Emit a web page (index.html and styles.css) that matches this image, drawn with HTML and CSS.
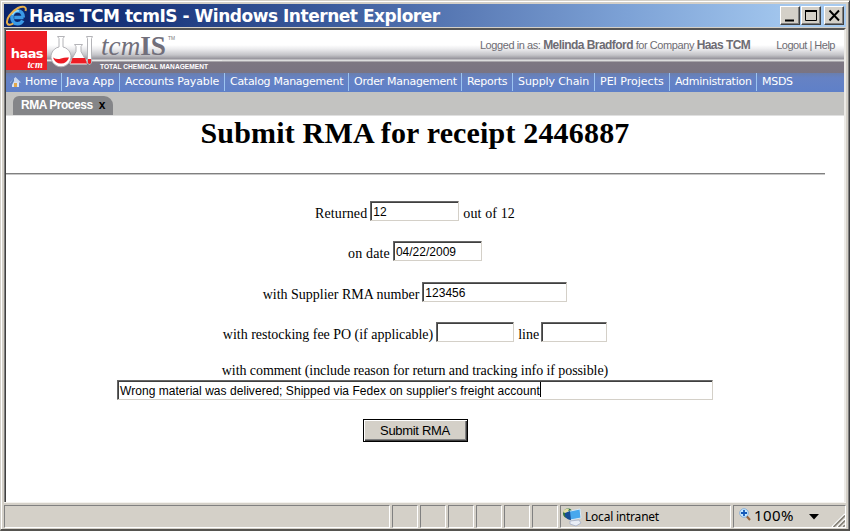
FILE: index.html
```
<!DOCTYPE html>
<html lang="en">
<head>
<meta charset="utf-8">
<title>Haas TCM tcmIS - Windows Internet Explorer</title>
<link rel="stylesheet" href="styles.css">
</head>
<body>
<div class="window">
  <div class="titlebar">
    <svg class="ie" width="23" height="22" viewBox="0 0 23 22">
      <path d="M18.500 12.500H9.200M17.800 15.500C16.500 18 14.500 18.800 12.500 18.800C9 18.800 6.900 16 6.900 12.300C6.900 8.500 9.500 6 12.700 6C16 6 18.300 8.400 18.300 12.500" fill="none" stroke="#3b9ae6" stroke-width="3.600"/>
      <path d="M7.500 10C8.500 7 11 5.500 14 6" fill="none" stroke="#8fdcff" stroke-width="1.600"/>
      <path d="M20.500 6C22 1.500 18 .5 13 3C6.500 6.500 .5 14 2.300 18.500C3.200 20.500 5.800 20 8.300 18.500" fill="none" stroke="#e8b04c" stroke-width="2"/>
    </svg>
    <span class="title">Haas TCM tcmIS - Windows Internet Explorer</span>
    <div class="controls">
      <span class="ctl"><svg width="16" height="16"><path d="M3 13.500h9" stroke="#000" stroke-width="2"/></svg></span>
      <span class="ctl"><svg width="16" height="16"><path d="M2.500 3.500h11v10h-11z" fill="none" stroke="#000"/><path d="M2 4h12" stroke="#000" stroke-width="2"/></svg></span>
      <span class="ctl close"><svg width="16" height="16"><path d="M3.500 3.500l9.500 10M13 3.500l-9.500 10" stroke="#000" stroke-width="1.900"/></svg></span>
    </div>
  </div>
  <div class="viewport">
    <div class="banner">
      <div class="haas"><b>haas</b><i>tcm</i></div>
      <svg class="logo" width="175" height="42" viewBox="0 0 175 42">
        <path d="M0 30.500H175" stroke="#e8e8e8" stroke-width="1.200"/>
        <g fill="#fff" stroke="#b4b4b8" stroke-width="1">
          <path d="M10.500 6.500h7l-1.500 2v8.500a10 10 0 1 1-4 0V8.500z"/>
          <path d="M27.500 14.500h8l-1.500 2v5l6 11q1 2-2 2H25q-3 0-2-2l6-11v-5z"/>
          <path d="M39.500 6.500h6l-1 2v24q-2 4-4 0v-24z"/>
        </g>
        <path d="M6 27.500q4 2.500 8 1t8-1q-2 6-8 6t-8-6z" fill="#ed1c24"/>
        <path d="M25.500 28h12.500l2 5.500H23.500z" fill="#ed1c24"/>
        <path d="M41 29h3v4q-1.500 2-3 0z" fill="#ed1c24"/>
        <text x="54" y="25" class="tcmis" textLength="65" lengthAdjust="spacingAndGlyphs"><tspan font-style="italic">tcm</tspan><tspan font-weight="bold">IS</tspan></text>
        <text x="121" y="10" class="tm" textLength="7" lengthAdjust="spacingAndGlyphs">TM</text>
        <text x="53" y="38.500" class="tagline" textLength="108" lengthAdjust="spacingAndGlyphs">TOTAL CHEMICAL MANAGEMENT</text>
      </svg>
      <div class="session"><span class="who">Logged in as: <b>Melinda Bradford</b> for Company <b>Haas TCM</b></span><span class="links">Logout | Help</span></div>
    </div>
    <nav class="menu">
      <a class="m-home"><svg width="11" height="12" viewBox="0 0 11 12"><path d="M2 6h7v5H2z" fill="#d8e4f4"/><path d="M0 6.500L5.500 1L11 6.500z" fill="#c9d6ee"/><path d="M1 6L4 2v3L2 9z" fill="#5c7fb8"/><path d="M4 7h3v4H4z" fill="#e2a84a"/></svg><span>Home</span></a>
      <a class="m-java">Java App</a>
      <a class="m-acct">Accounts Payable</a>
      <a class="m-cat">Catalog Management</a>
      <a class="m-order">Order Management</a>
      <a class="m-rep">Reports</a>
      <a class="m-supply">Supply Chain</a>
      <a class="m-pei">PEI Projects</a>
      <a class="m-admin">Administration</a>
      <a class="m-msds">MSDS</a>
    </nav>
    <div class="tabs"><div class="tab"><span>RMA Process</span><b>x</b></div></div>
    <main class="page">
      <h1>Submit RMA for receipt 2446887</h1>
      <hr>
      <form>
        <div class="row r-qty"><label>Returned</label><input class="w-qty" value="12"><label>out of 12</label></div>
        <div class="row r-date"><label>on date</label><input class="w-date" value="04/22/2009"></div>
        <div class="row r-rma"><label>with Supplier RMA number</label><input class="w-rma" value="123456"></div>
        <div class="row r-fee"><label>with restocking fee PO (if applicable)</label><input class="w-po"><label>line</label><input class="w-line"></div>
        <div class="comment-label">with comment (include reason for return and tracking info if possible)</div>
        <div class="comment"><span>Wrong material was delivered; Shipped via Fedex on supplier's freight account</span></div>
        <button type="button"><span>Submit RMA</span></button>
      </form>
    </main>
  </div>
  <footer class="status">
    <div class="cell msg"></div><div class="cell s"></div><div class="cell s"></div><div class="cell s"></div><div class="cell s"></div><div class="cell s"></div><div class="cell s last"></div>
    <div class="cell zone">
      <svg width="20" height="20" viewBox="0 0 20 20"><circle cx="6" cy="6.500" r="5" fill="#31723f"/><path d="M1 5q2-4 6-3l-2 5z" fill="#e2dda4"/><path d="M6 4.500L18 2l1 9-11 2z" fill="#48a8ed" stroke="#d9e9f7"/><path d="M3 6l5-2 1 9q-4 0-6-4z" fill="#164d94"/><path d="M8 14l9-1 2 3-5 3-6-2z" fill="#e8edf5" stroke="#9daac4" stroke-width=".7"/></svg>
      <span>Local intranet</span>
    </div>
    <div class="cell zoom">
      <svg class="lens" width="12" height="13" viewBox="0 0 12 13"><path d="M7.500 8l3.500 4" stroke="#98653e" stroke-width="2"/><circle cx="5" cy="5" r="4.300" fill="#c8e9ff" stroke="#86aeda"/><path d="M5 2v6M2 5h6" stroke="#1559b8" stroke-width="1.800"/></svg>
      <span>100%</span>
      <svg class="drop" width="10" height="6"><path d="M0 0h10L5 5.500z" fill="#000"/></svg>
      <svg class="grip" width="15" height="15"><path d="M2 15L15 2M7 15l8-8M12 15l3-3" stroke="#fff" stroke-width="1.500"/><path d="M3.500 15L15 3.500M8.500 15L15 8.500M13 15l2-2" stroke="#858178" stroke-width="1.700"/></svg>
    </div>
  </footer>
</div>
</body>
</html>
```
FILE: styles.css
```
* { box-sizing: border-box; }
body { margin: 0; }
.window {
  width: 850px; height: 531px; overflow: hidden;
  background: #d4d0c8;
  border: 1px solid #d4d0c8; border-right-color: #404040; border-bottom: 2px solid #55534f;
  box-shadow: inset 1px 1px #fff, inset -1px 0 #808080;
  padding: 3px 3px 0 3px;
  font-family: "Liberation Sans", sans-serif;
  display: flex; flex-direction: column;
}
.titlebar {
  height: 23px; flex: none; display: flex; align-items: center; padding-right: 2px;
  background: linear-gradient(90deg, #0a246a 0, #18347a 15%, #3a5a9c 38%, #5f80ba 57%, #7da2d6 74%, #a6caf0 95%);
}
.ie { flex: none; margin-left: 1px; }
.title { margin-left: 1px; color: #fff; font: bold 17px "DejaVu Sans", sans-serif; letter-spacing: -.47px; white-space: nowrap; line-height: 25px; padding-top: 2px; }
.controls { margin-left: auto; display: flex; }
.ctl { width: 20px; height: 19px; background: #d4d0c8; border: 1px solid; border-color: #fff #404040 #404040 #fff; box-shadow: inset -1px -1px #808080; padding: 0 0 0 1px; }
.ctl + .ctl { margin-left: 1px; }
.ctl svg { display: block; }
.ctl + .ctl.close { margin-left: 3px; }
.viewport {
  margin-top: 1px; height: 474px; flex: none;
  border: 1px solid #808080; border-top: 2px solid #555; border-right: 2px solid #eceae6; border-bottom: 0;
  box-shadow: inset 1px 0 #404040; padding-left: 1px; background: #fff;
}
.banner {
  height: 43px; display: flex;
  background: linear-gradient(#fff 0, #fff 15px, #ececee 19px, #c4c4c8 25px, #94929a 29px, #e4e4e4 30px, #d4d4d4 31px, #7d7782 32px, #7a7482 43px);
}
.haas { width: 41px; height: 39px; margin: 1px 0 0 0; background: #ee1c24; color: #fff; display: flex; flex-direction: column; align-items: flex-end; padding: 17px 4px 0 0; }
.haas b { font: bold 13px/11px "DejaVu Sans", sans-serif; letter-spacing: -.6px; }
.haas i { font: italic bold 10px/10px "Liberation Serif", serif; letter-spacing: .2px; margin-top: 1px; }
.tcmis { font-family: "Liberation Serif", serif; font-size: 27px; fill: #716f7b; }
.tm { font-size: 5px; fill: #777; }
.tagline { font-size: 7px; font-weight: bold; fill: #fff; }
.session { margin-left: auto; display: flex; color: #6e6c73; font-size: 11px; letter-spacing: -.42px; line-height: 14px; padding: 8px 9px 0 0; white-space: nowrap; }
.session b { font-size: 12px; letter-spacing: -.55px; }
.links { margin-left: 26px; letter-spacing: -.5px; }
.menu {
  height: 19px; display: flex; color: #fff; font: 11px/18px "DejaVu Sans", sans-serif; letter-spacing: -.28px; white-space: nowrap;
  background: linear-gradient(#6a7fae, #6682c4 5px, #5f80c8);
}
.menu a { border-right: 1px solid #9cc4f0; padding-left: 5px; flex: none; height: 18px; }
.menu .m-home { width: 56px; display: flex; align-items: center; gap: 4px; padding-left: 4px; letter-spacing: -.1px; }
.menu .m-java { width: 58px; padding-left: 4px; letter-spacing: 0; }
.menu .m-acct { width: 105px; letter-spacing: -.15px; }
.menu .m-cat { width: 124px; }
.menu .m-order { width: 113px; }
.menu .m-rep { width: 51px; }
.menu .m-supply { width: 82px; letter-spacing: -.1px; }
.menu .m-pei { width: 75px; letter-spacing: 0; }
.menu .m-admin { width: 87px; }
.menu .m-msds { border: 0; }
.tabs { height: 24px; background: #c3c3c1; border-bottom: 1px solid #e0e0e0; padding: 4px 0 0 7px; }
.tab { width: 100px; height: 19px; border-radius: 6px 9px 0 0; background: #848588; color: #fff; font: bold 12px/18px "Liberation Sans", sans-serif; letter-spacing: -.48px; padding-left: 8px; display: flex; white-space: nowrap; }
.tab b { color: #000; margin-left: 6px; }
.page { width: 819px; color: #000; font: 14px/20px "Liberation Serif", serif; }
h1 { margin: 0 1px 0 0; font-size: 30px; letter-spacing: .17px; line-height: 34px; text-align: center; white-space: nowrap; }
hr { margin: 23px 0 26px; height: 2px; border: 0; border-top: 1px solid #808080; border-bottom: 1px solid #c8c8c8; }
form { display: flex; flex-direction: column; align-items: center; margin-right: 1px; }
.row { display: flex; height: 20px; margin-bottom: 20px; gap: 3px; white-space: nowrap; }
.row label { line-height: 25px; }
.row label + input + label { margin-left: 1px; }
.r-qty { letter-spacing: .12px; }
.r-date { margin-bottom: 21px; letter-spacing: .15px; }
.r-rma { margin-bottom: 20px; }
.r-fee { letter-spacing: -.02px; }
.r-fee .w-line { margin-left: -1px; }
input, .comment { height: 20px; border: 1px solid; border-color: #666 #d4d0c8 #d4d0c8 #666; box-shadow: inset 1px 1px #404040; background: #fff; color: #000; font: 12px/18px "Liberation Sans", sans-serif; padding: 1px 0 0 2px; border-radius: 0; outline: 0; margin: 0; }
.w-qty, .w-date { width: 89px; }
.w-rma { width: 145px; }
.w-po { width: 78px; }
.w-line { width: 66px; }
.comment-label { line-height: 22px; height: 20px; margin-top: -2px; letter-spacing: -.08px; white-space: nowrap; }
.comment { width: 596px; display: flex; letter-spacing: .045px; }
.comment span { border-right: 1px solid #000; height: 15px; line-height: 18px; white-space: nowrap; }
button { margin-top: 19px; width: 105px; height: 23px; padding: 0; background: #d4d0c8; border: 1px solid #000; border-radius: 0; box-shadow: inset 1px 1px #fff, inset -1px -1px #404040, inset -2px -2px #808080; font: 13px/20px "Liberation Sans", sans-serif; letter-spacing: -.3px; color: #000; }
.status { height: 27px; flex: none; display: flex; background: #d4d0c8; border-top: 1px solid #f4f2ee; padding-top: 2px; }
.cell { height: 23px; border: 1px solid; border-color: #808080 #fff #fff #808080; margin-right: 2px; flex: none; }
.msg { width: 386px; }
.s { width: 26px; }
.s.last { width: 26px; }
.zone { width: 171px; display: flex; align-items: center; font: 12px/20px "Noto Sans", sans-serif; letter-spacing: -.22px; color: #000; white-space: nowrap; gap: 3px; padding-left: 1px; }
.zoom { width: 113px; display: flex; align-items: flex-start; font: 15px/20px "Noto Sans", sans-serif; white-space: nowrap; padding-left: 5px; margin: 0; }
.zoom span { margin: -1px 0 0 3px; letter-spacing: .4px; }
.lens { margin-top: 2px; }
.drop { margin: 8px 0 0 15px; }
.grip { margin-left: auto; align-self: flex-end; }
```
